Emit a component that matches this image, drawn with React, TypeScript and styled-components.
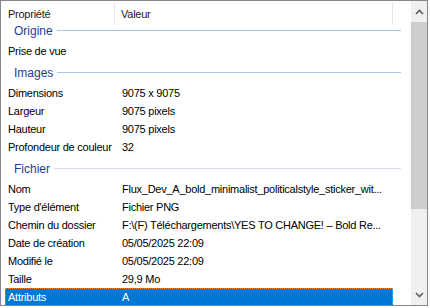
import React from "react";
import styled, { createGlobalStyle } from "styled-components";

const GlobalStyle = createGlobalStyle`
  html, body {
    margin: 0;
    padding: 0;
    background: #ffffff;
  }
  body {
    font-family: "Liberation Sans", Arial, sans-serif;
  }
`;

const Frame = styled.div`
  width: 428px;
  height: 306px;
  box-sizing: border-box;
  border: 1px solid #828790;
  display: flex;
  overflow: hidden;
  background: #ffffff;
`;

const Main = styled.div`
  width: 410px;
  display: flex;
  flex-direction: column;
  overflow: hidden;
`;

const Header = styled.div`
  display: flex;
  height: 24px;
  flex-shrink: 0;
`;

const HeaderCell = styled.div<{ $width: number; $pad: number }>`
  width: ${(p) => p.$width}px;
  box-sizing: border-box;
  padding-left: ${(p) => p.$pad}px;
  border-right: 1px solid #e5e5e5;
  margin: 1px 0 0;
  display: flex;
  align-items: center;
  font-size: 11px;
  letter-spacing: -0.25px;
  color: #1a1a1a;
`;

const Body = styled.div`
  flex: 1;
  padding-left: 4px;
  display: flex;
  flex-direction: column;
  overflow: hidden;
`;

const GroupHeader = styled.div<{ $height: number; $top: number }>`
  width: 396px;
  height: ${(p) => p.$height}px;
  box-sizing: border-box;
  padding: ${(p) => p.$top}px 0 0 9px;
  display: flex;
  align-items: flex-start;
  gap: 4px;
  flex-shrink: 0;
`;

const GroupTitle = styled.span`
  font-size: 12px;
  line-height: 12px;
  color: #1e3a9e;
`;

const GroupLine = styled.span<{ $color: string }>`
  flex: 1;
  height: 1px;
  margin-top: 5px;
  background: ${(p) => p.$color};
`;

const Row = styled.div<{ $selected?: boolean }>`
  width: 388px;
  height: 18px;
  flex-shrink: 0;
  box-sizing: border-box;
  display: grid;
  grid-template-columns: 109px 1fr;
  align-items: center;
  font-size: 11px;
  letter-spacing: -0.25px;
  color: ${(p) => (p.$selected ? "#ffffff" : "#000000")};
  background: ${(p) => (p.$selected ? "#0078d7" : "transparent")};
  border: 1px ${(p) => (p.$selected ? "dotted #ff8728" : "solid transparent")};
`;

const Name = styled.span`
  padding-left: 2px;
  white-space: nowrap;
  overflow: hidden;
`;

const Value = styled.span`
  padding-left: 7px;
  white-space: nowrap;
  overflow: hidden;
  text-overflow: ellipsis;
`;

const ScrollBar = styled.div`
  width: 16px;
  background: #f0f0f0;
  display: flex;
  flex-direction: column;
`;

const ArrowButton = styled.div`
  height: 21px;
  display: flex;
  align-items: center;
  justify-content: center;
  flex-shrink: 0;
`;

const Thumb = styled.div`
  height: 187px;
  background: #cdcdcd;
`;

const Track = styled.div`
  flex: 1;
`;

const Chevron = ({ up }: { up?: boolean }) => (
  <svg width="9" height="6" viewBox="0 0 9 6">
    <polyline
      points={up ? "1,5 4.5,1.5 8,5" : "1,1 4.5,4.5 8,1"}
      fill="none"
      stroke="#606060"
      strokeWidth="1.6"
    />
  </svg>
);

interface Prop {
  name: string;
  value: string;
  selected?: boolean;
}

interface Group {
  title: string;
  line: string;
  items: Prop[];
}

const groups: Group[] = [
  {
    title: "Origine",
    line: "#b3c3e6",
    items: [{ name: "Prise de vue", value: "" }],
  },
  {
    title: "Images",
    line: "#b3c3e6",
    items: [
      { name: "Dimensions", value: "9075 x 9075" },
      { name: "Largeur", value: "9075 pixels" },
      { name: "Hauteur", value: "9075 pixels" },
      { name: "Profondeur de couleur", value: "32" },
    ],
  },
  {
    title: "Fichier",
    line: "#d5ddf2",
    items: [
      { name: "Nom", value: "Flux_Dev_A_bold_minimalist_politicalstyle_sticker_wit..." },
      { name: "Type d'élément", value: "Fichier PNG" },
      { name: "Chemin du dossier", value: "F:\\(F) Téléchargements\\YES TO CHANGE! – Bold Re..." },
      { name: "Date de création", value: "05/05/2025 22:09" },
      { name: "Modifié le", value: "05/05/2025 22:09" },
      { name: "Taille", value: "29,9 Mo" },
      { name: "Attributs", value: "A", selected: true },
    ],
  },
];

export default function App() {
  return (
    <>
      <GlobalStyle />
      <Frame>
        <Main>
          <Header>
            <HeaderCell $width={114} $pad={7}>Propriété</HeaderCell>
            <HeaderCell $width={278} $pad={6}>Valeur</HeaderCell>
          </Header>
          <Body>
            {groups.map((g, i) => (
              <React.Fragment key={g.title}>
                <GroupHeader $height={i === 0 ? 17 : 24} $top={i === 0 ? 0 : 7}>
                  <GroupTitle>{g.title}</GroupTitle>
                  <GroupLine $color={g.line} />
                </GroupHeader>
                {g.items.map((it) => (
                  <Row key={it.name} $selected={it.selected}>
                    <Name>{it.name}</Name>
                    <Value>{it.value}</Value>
                  </Row>
                ))}
              </React.Fragment>
            ))}
          </Body>
        </Main>
        <ScrollBar>
          <ArrowButton>
            <Chevron up />
          </ArrowButton>
          <Thumb />
          <Track />
          <ArrowButton>
            <Chevron />
          </ArrowButton>
        </ScrollBar>
      </Frame>
    </>
  );
}
